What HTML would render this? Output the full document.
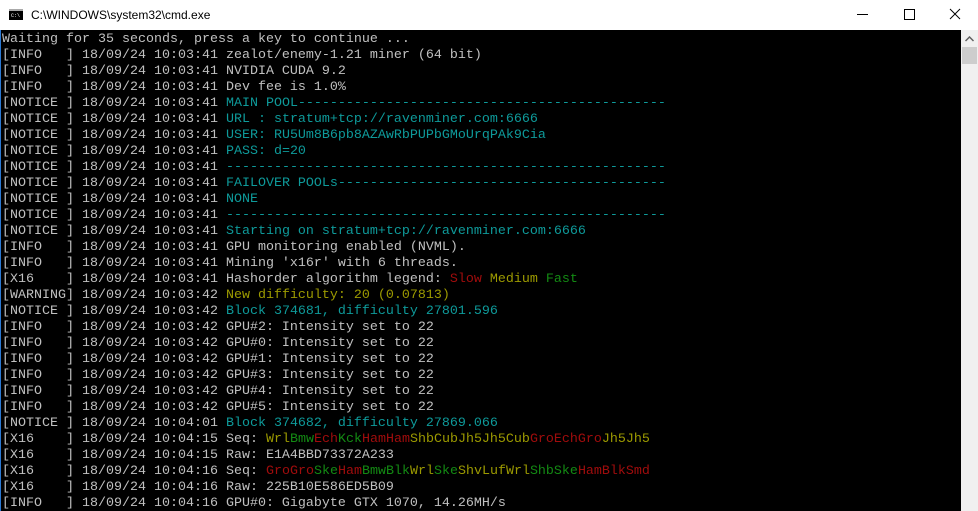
<!DOCTYPE html>
<html><head><meta charset="utf-8"><style>
html,body{margin:0;padding:0;width:978px;height:511px;overflow:hidden;background:#fff;}
.title{position:absolute;left:0;top:0;width:978px;height:30px;background:#fff;font-family:"Liberation Sans",sans-serif;font-size:12px;color:#000;}
.title .t{position:absolute;left:31px;top:8px;}
.icon{position:absolute;left:9px;top:9px;width:14px;height:11px;background:#000;border-top:2px solid #aaa;box-sizing:border-box;}
.icon span{position:absolute;left:2px;top:2px;color:#fff;font-size:5px;font-family:"Liberation Mono",monospace;}
.con{position:absolute;left:0;top:30px;width:961px;height:481px;background:#000;overflow:hidden;}
pre{margin:0;padding:2px 0 0 2px;font-family:"Liberation Mono",monospace;font-size:13.33px;line-height:16px;color:#c0c0c0;}
.c{color:#0e9a9a}.r{color:#a00c0c}.y{color:#9c9a00}.g{color:#138a13}
.sb{position:absolute;left:961px;top:30px;width:17px;height:481px;background:#f0f0f0;}
.thumb{position:absolute;left:1px;top:17px;width:15px;height:17px;background:#cdcdcd;}
.bl{position:absolute;left:0;top:30px;width:1px;height:481px;background:#2b79d4;}
</style></head><body>
<div class="title"><div class="icon"><span>C:\</span></div><div class="t">C:\WINDOWS\system32\cmd.exe</div>
<svg style="position:absolute;left:850px;top:5px" width="128" height="20">
<line x1="7" y1="9.5" x2="18" y2="9.5" stroke="#000" stroke-width="1"/>
<rect x="54.5" y="4.5" width="10" height="10" fill="none" stroke="#000" stroke-width="1"/>
<line x1="100" y1="4" x2="110" y2="14" stroke="#000" stroke-width="1"/>
<line x1="110" y1="4" x2="100" y2="14" stroke="#000" stroke-width="1"/>
</svg></div>
<div class="con"><pre>Waiting for 35 seconds, press a key to continue ...
[INFO   ] 18/09/24 10:03:41 zealot/enemy-1.21 miner (64 bit)
[INFO   ] 18/09/24 10:03:41 NVIDIA CUDA 9.2
[INFO   ] 18/09/24 10:03:41 Dev fee is 1.0%
[NOTICE ] 18/09/24 10:03:41 <span class="c">MAIN POOL----------------------------------------------</span>
[NOTICE ] 18/09/24 10:03:41 <span class="c">URL : stratum+tcp://ravenminer.com:6666</span>
[NOTICE ] 18/09/24 10:03:41 <span class="c">USER: RU5Um8B6pb8AZAwRbPUPbGMoUrqPAk9Cia</span>
[NOTICE ] 18/09/24 10:03:41 <span class="c">PASS: d=20</span>
[NOTICE ] 18/09/24 10:03:41 <span class="c">-------------------------------------------------------</span>
[NOTICE ] 18/09/24 10:03:41 <span class="c">FAILOVER POOLs-----------------------------------------</span>
[NOTICE ] 18/09/24 10:03:41 <span class="c">NONE</span>
[NOTICE ] 18/09/24 10:03:41 <span class="c">-------------------------------------------------------</span>
[NOTICE ] 18/09/24 10:03:41 <span class="c">Starting on stratum+tcp://ravenminer.com:6666</span>
[INFO   ] 18/09/24 10:03:41 GPU monitoring enabled (NVML).
[INFO   ] 18/09/24 10:03:41 Mining 'x16r' with 6 threads.
[X16    ] 18/09/24 10:03:41 Hashorder algorithm legend: <span class="r">Slow</span> <span class="y">Medium</span> <span class="g">Fast</span>
[WARNING] 18/09/24 10:03:42 <span class="y">New difficulty: 20 (0.07813)</span>
[NOTICE ] 18/09/24 10:03:42 <span class="c">Block 374681, difficulty 27801.596</span>
[INFO   ] 18/09/24 10:03:42 GPU#2: Intensity set to 22
[INFO   ] 18/09/24 10:03:42 GPU#0: Intensity set to 22
[INFO   ] 18/09/24 10:03:42 GPU#1: Intensity set to 22
[INFO   ] 18/09/24 10:03:42 GPU#3: Intensity set to 22
[INFO   ] 18/09/24 10:03:42 GPU#4: Intensity set to 22
[INFO   ] 18/09/24 10:03:42 GPU#5: Intensity set to 22
[NOTICE ] 18/09/24 10:04:01 <span class="c">Block 374682, difficulty 27869.066</span>
[X16    ] 18/09/24 10:04:15 Seq: <span class="y">Wrl</span><span class="g">Bmw</span><span class="r">Ech</span><span class="g">Kck</span><span class="r">HamHam</span><span class="y">ShbCubJh5Jh5Cub</span><span class="r">GroEchGro</span><span class="y">Jh5Jh5</span>
[X16    ] 18/09/24 10:04:15 Raw: E1A4BBD73372A233
[X16    ] 18/09/24 10:04:16 Seq: <span class="r">GroGro</span><span class="g">Ske</span><span class="r">Ham</span><span class="g">BmwBlk</span><span class="y">Wrl</span><span class="g">Ske</span><span class="y">ShvLufWrl</span><span class="g">ShbSke</span><span class="r">HamBlkSmd</span>
[X16    ] 18/09/24 10:04:16 Raw: 225B10E586ED5B09
[INFO   ] 18/09/24 10:04:16 GPU#0: Gigabyte GTX 1070, 14.26MH/s
</pre></div>
<div class="bl"></div>
<div class="sb"><svg style="position:absolute;left:4px;top:6px" width="9" height="6"><path d="M0.5 5 L4.5 1 L8.5 5" fill="none" stroke="#606060" stroke-width="1.5"/></svg><div class="thumb"></div></div>
</body></html>
